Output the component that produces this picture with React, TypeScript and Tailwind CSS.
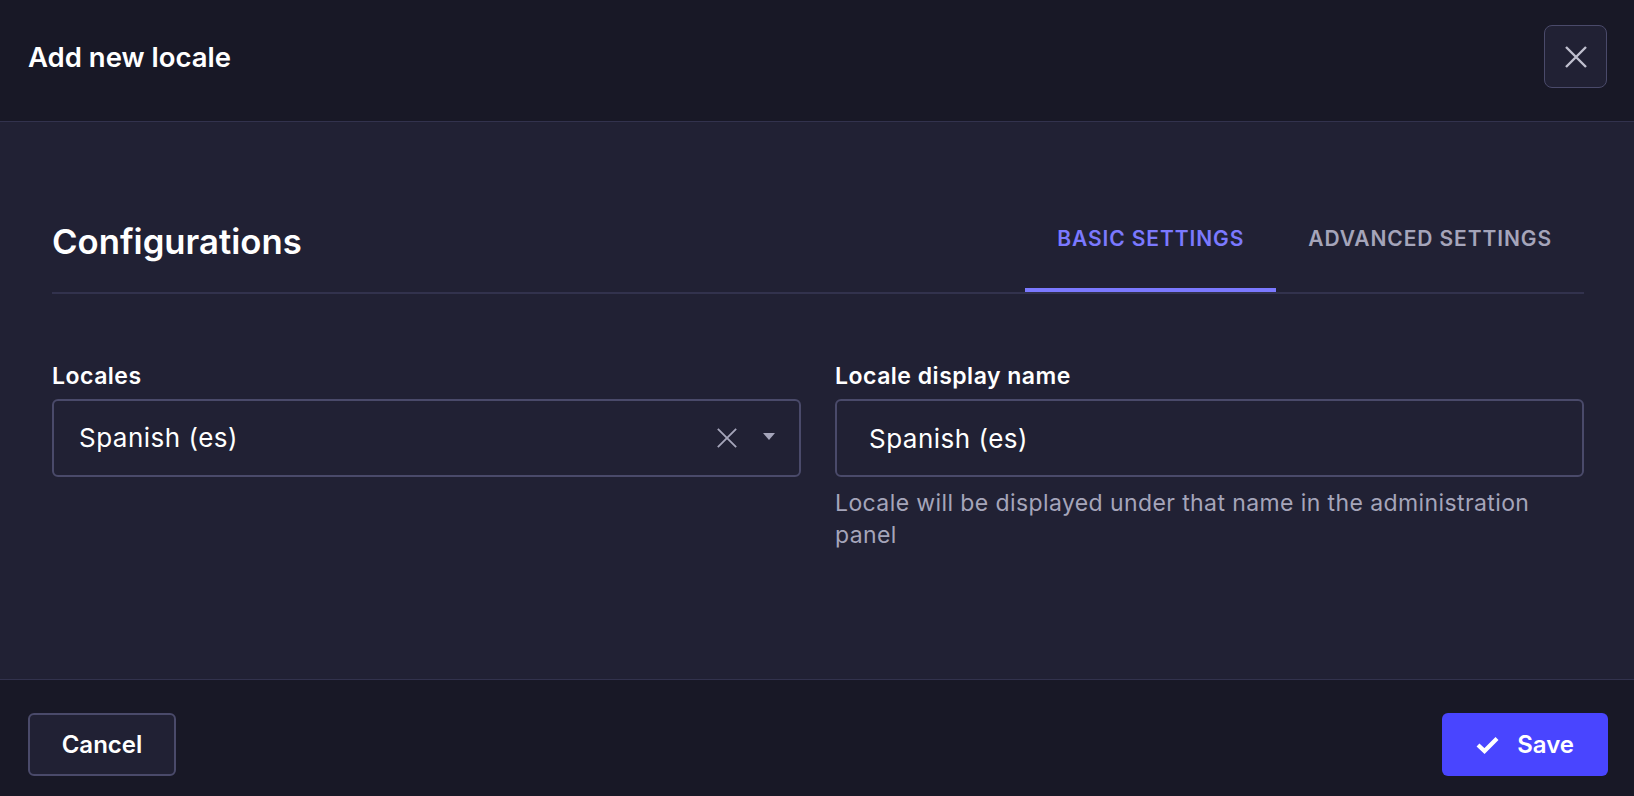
import { useState } from "react";

const tabs = ["Basic settings", "Advanced settings"];

const CloseIcon = ({ size, stroke, color }: { size: number; stroke: number; color: string }) => (
  <svg width={size} height={size} viewBox="0 0 24 24" fill="none">
    <path d="M2 2L22 22M22 2L2 22" stroke={color} strokeWidth={stroke} strokeLinecap="butt" />
  </svg>
);

const App = () => {
  const [tab, setTab] = useState(0);
  const [name, setName] = useState("Spanish (es)");

  return (
    <div
      className="flex min-h-[796px] flex-col bg-[#212134] text-white"
      style={{ fontFamily: "Inter, 'Noto Sans', sans-serif" }}
    >
      {/* header */}
      <header className="flex h-[122px] items-center justify-between border-b border-[#32324d] bg-[#181826] pb-[8px] pl-[28px] pr-[27px]">
        <h2 className="text-[27.5px] font-semibold leading-[36px]">Add new locale</h2>
        <button className="flex h-[63px] w-[63px] items-center justify-center rounded-[8px] border border-[#4a4a6a] bg-[#212134]">
          <CloseIcon size={24} stroke={2.4} color="#c0c0cf" />
        </button>
      </header>

      {/* body */}
      <main className="flex-1 border-b border-[#32324d] pl-[52px] pr-[50px] pt-[97px]">
        <div className="flex items-end justify-between border-b-2 border-[#32324d]">
          <h3 className="pb-[29px] text-[34.7px] font-semibold leading-[44px]">Configurations</h3>
          <div className="flex">
            {tabs.map((t, i) => (
              <button
                key={t}
                onClick={() => setTab(i)}
                className={
                  i === tab
                    ? "border-b-4 border-[#7b79ff] px-[32px] pb-[35px] text-[21px] font-semibold uppercase leading-[28px] tracking-[0.9px] text-[#7b79ff]"
                    : "border-b-4 border-transparent px-[32px] pb-[35px] text-[21px] font-semibold uppercase leading-[28px] tracking-[0.9px] text-[#a5a5ba]"
                }
              >
                {t}
              </button>
            ))}
          </div>
        </div>

        <div className="mt-[66px] grid grid-cols-2 gap-[34px]">
          <div>
            <label className="mb-[7px] block text-[23px] font-semibold leading-[32px] tracking-[0.5px]">Locales</label>
            <div className="flex h-[78px] items-center rounded-[6px] border-2 border-[#4a4a6a] pl-[25px] pr-[24px]">
              <span className="flex-1 text-[26px] leading-[32px] tracking-[0.5px]">Spanish (es)</span>
              <button className="mr-[25px] flex items-center">
                <CloseIcon size={22} stroke={2} color="#a5a5ba" />
              </button>
              <svg width="12" height="7" viewBox="0 0 12 7" className="mb-[4px]">
                <path d="M0 0H12L6 7Z" fill="#a5a5ba" />
              </svg>
            </div>
          </div>
          <div>
            <label className="mb-[7px] block text-[23px] font-semibold leading-[32px] tracking-[0.5px]">
              Locale display name
            </label>
            <input
              value={name}
              onChange={(e) => setName(e.target.value)}
              className="block h-[78px] w-full rounded-[6px] border-2 border-[#4a4a6a] bg-transparent px-[32px] text-[26px] leading-[32px] tracking-[0.5px] text-white outline-none"
            />
            <p className="mt-[10px] pr-[40px] text-[23px] leading-[32px] tracking-[0.4px] text-[#a5a5ba]">
              Locale will be displayed under that name in the administration panel
            </p>
          </div>
        </div>
      </main>

      {/* footer */}
      <footer className="flex items-center justify-between bg-[#181826] pb-[20px] pl-[28px] pr-[26px] pt-[33px]">
        <button className="h-[63px] w-[148px] rounded-[6px] border-2 border-[#4a4a6a] bg-[#212134] text-[24px] font-semibold">
          Cancel
        </button>
        <button className="flex h-[63px] items-center gap-[18px] rounded-[6px] bg-[#4945ff] pl-[34px] pr-[34px] text-[24px] font-semibold">
          <svg width="23" height="18" viewBox="0 0 23 18" fill="none">
            <path d="M2 9L8.5 15L21 2.5" stroke="white" strokeWidth="4.2" />
          </svg>
          Save
        </button>
      </footer>
    </div>
  );
};

export default App;
